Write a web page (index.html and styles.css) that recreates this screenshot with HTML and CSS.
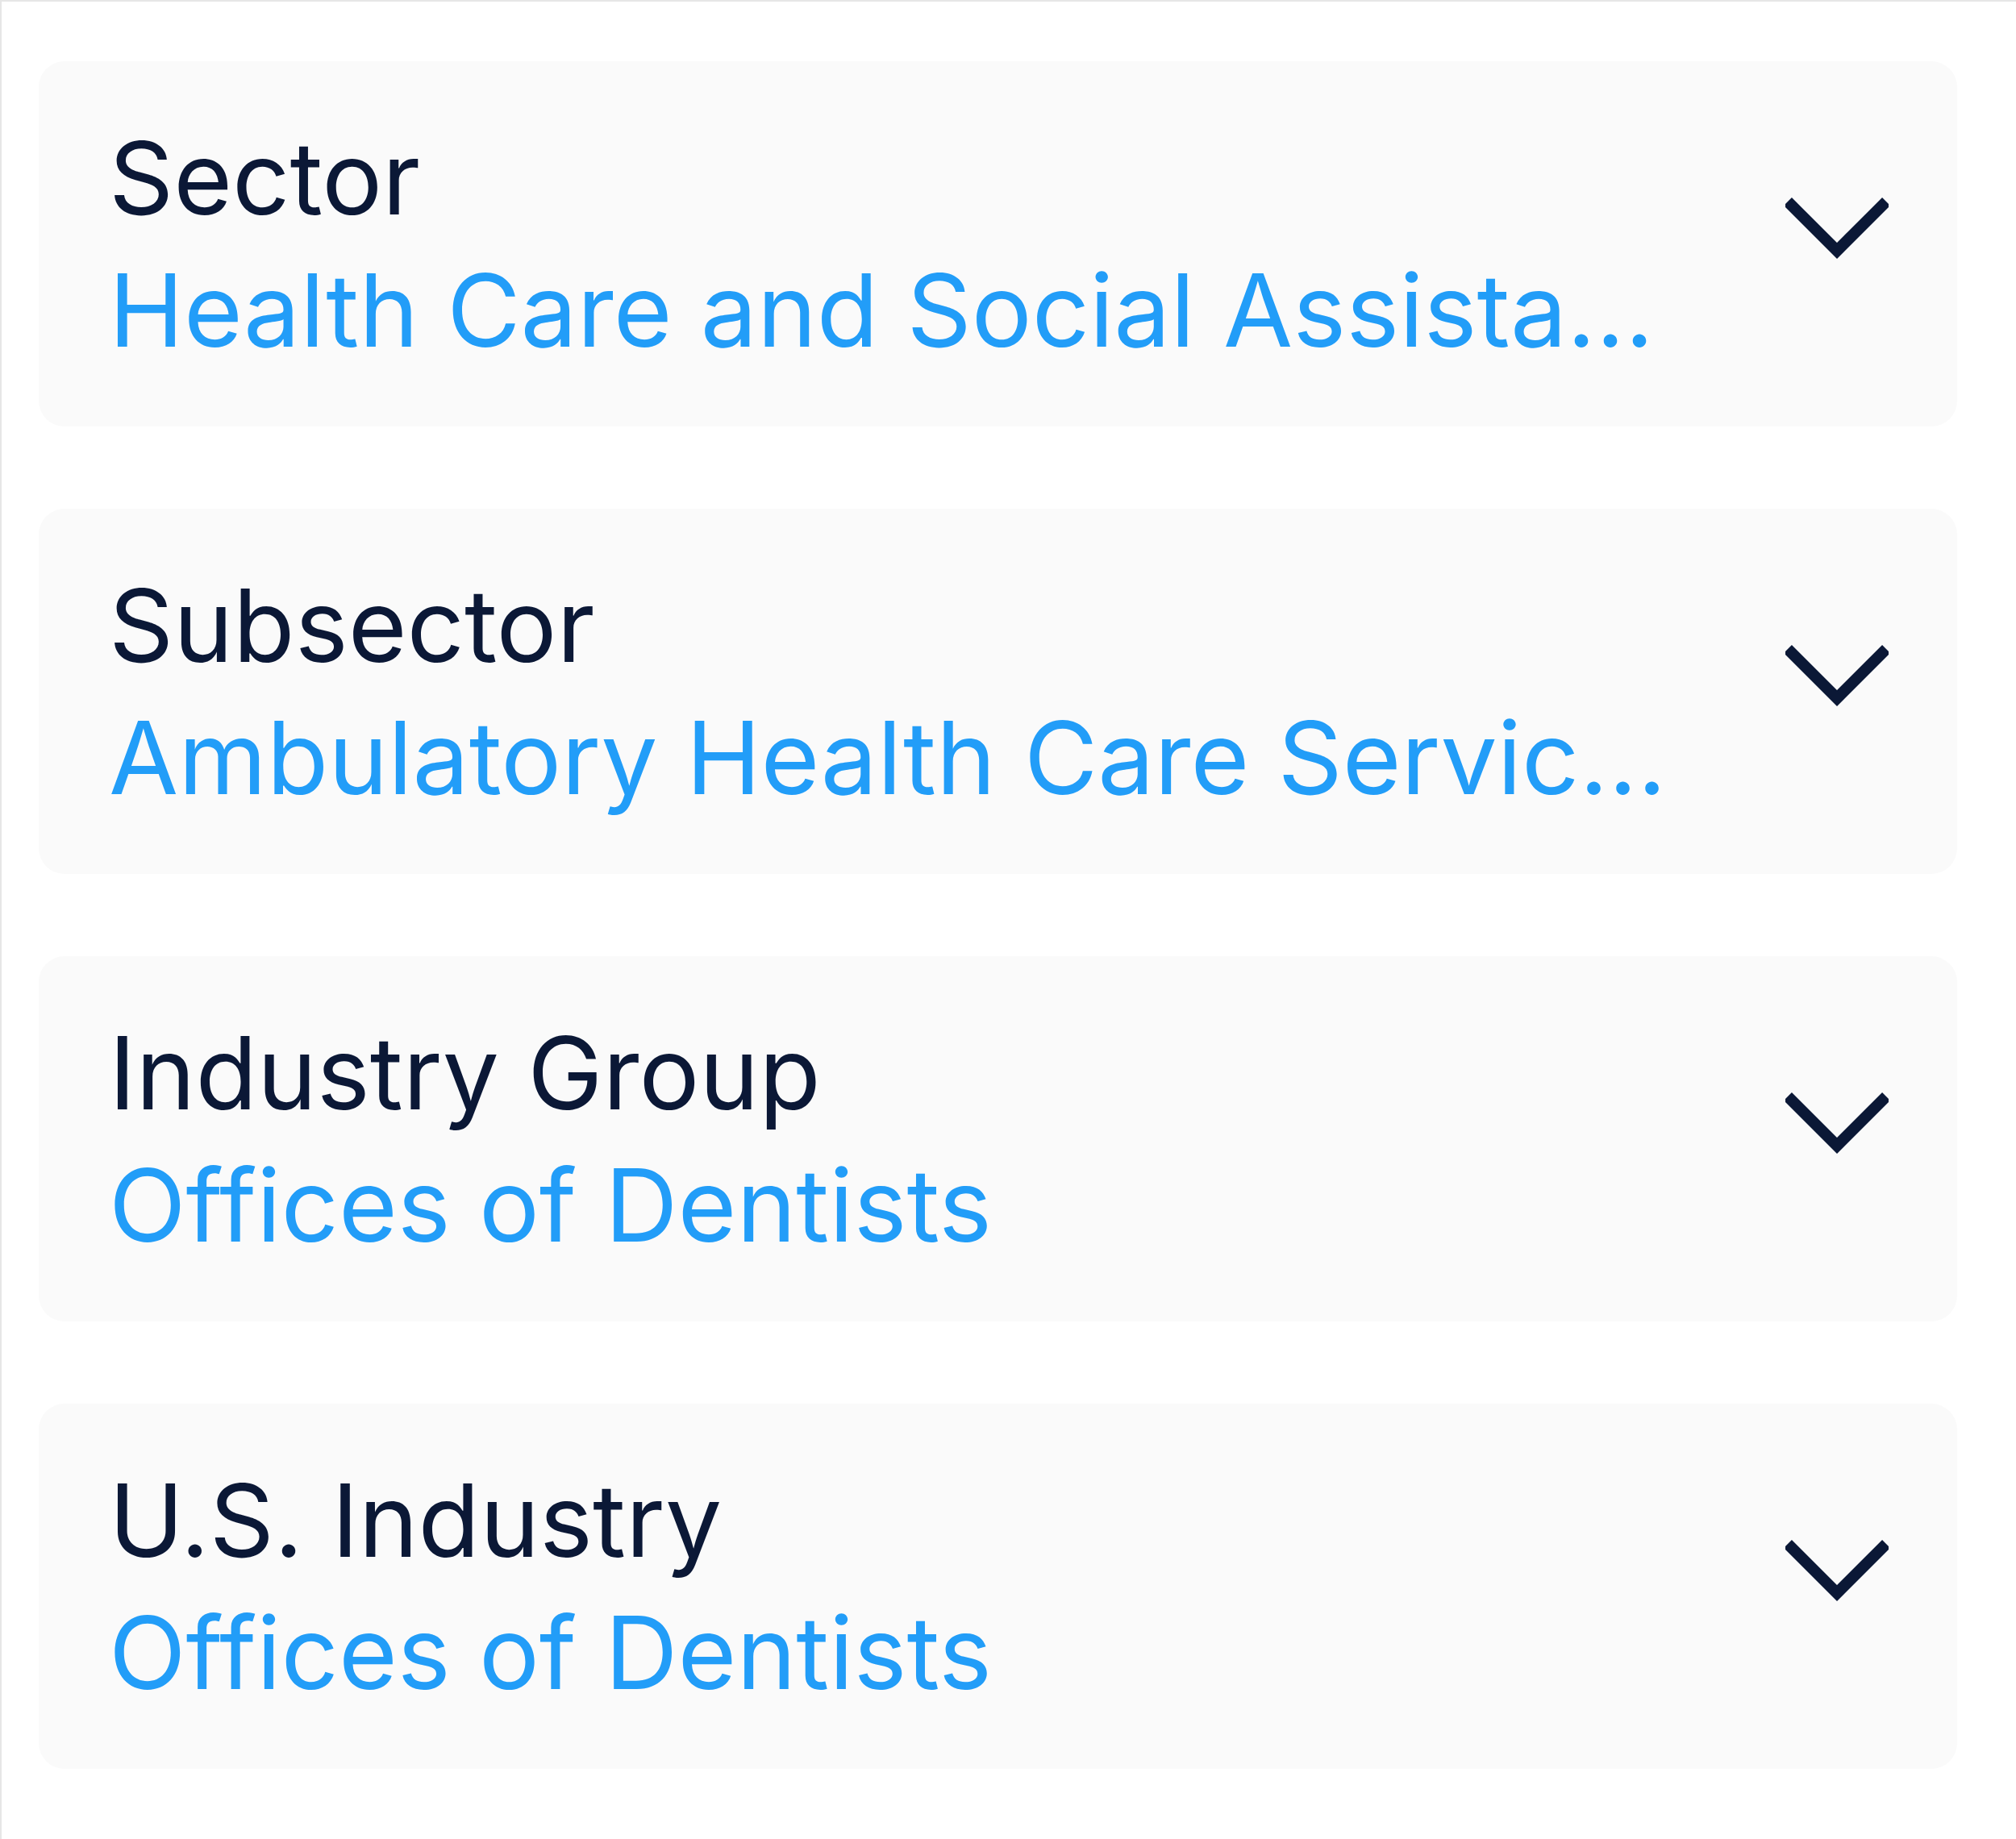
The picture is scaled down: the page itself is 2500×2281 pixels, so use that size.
FILE: index.html
```html
<!DOCTYPE html>
<html lang="en">
<head>
<meta charset="utf-8">
<title>Classification</title>
<link rel="stylesheet" href="styles.css">
</head>
<body>
<div class="panel">
  <div class="field">
    <div class="field-text">
      <div class="field-label">Sector</div>
      <div class="field-value">Health Care and Social Assistance</div>
    </div>
    <svg class="chevron" viewBox="0 0 128 128" aria-hidden="true"><path d="M3 11 L64 72 L125 11"/></svg>
  </div>
  <div class="field">
    <div class="field-text">
      <div class="field-label">Subsector</div>
      <div class="field-value">Ambulatory Health Care Services</div>
    </div>
    <svg class="chevron" viewBox="0 0 128 128" aria-hidden="true"><path d="M3 11 L64 72 L125 11"/></svg>
  </div>
  <div class="field">
    <div class="field-text">
      <div class="field-label">Industry Group</div>
      <div class="field-value">Offices of Dentists</div>
    </div>
    <svg class="chevron" viewBox="0 0 128 128" aria-hidden="true"><path d="M3 11 L64 72 L125 11"/></svg>
  </div>
  <div class="field">
    <div class="field-text">
      <div class="field-label">U.S. Industry</div>
      <div class="field-value">Offices of Dentists</div>
    </div>
    <svg class="chevron" viewBox="0 0 128 128" aria-hidden="true"><path d="M3 11 L64 72 L125 11"/></svg>
  </div>
</div>
</body>
</html>
```

FILE: styles.css
```css
html, body {
  margin: 0;
  padding: 0;
  background: #ffffff;
}
body {
  font-family: Inter, "Noto Sans", "Liberation Sans", sans-serif;
}
.panel {
  width: 2500px;
  height: 2281px;
  box-sizing: border-box;
  border-top: 2px solid #e6e6e6;
  border-left: 2px solid #e6e6e6;
  padding: 74px 73px 0 46px;
  display: flex;
  flex-direction: column;
  gap: 102px;
}
.field {
  height: 453px;
  box-sizing: border-box;
  background: #fafafa;
  border-radius: 32px;
  padding: 0 85px 0 87px;
  display: flex;
  align-items: center;
  gap: 138px;
}
.field-text {
  flex: 1;
  min-width: 0;
}
.field-label {
  font-size: 125px;
  line-height: 164px;
  color: #0b1836;
  white-space: nowrap;
}
.field-value {
  font-size: 125px;
  line-height: 164px;
  color: #229df8;
  white-space: nowrap;
  overflow: hidden;
  text-overflow: ellipsis;
}
.chevron {
  width: 128px;
  height: 128px;
  flex: none;
}
.chevron path {
  fill: none;
  stroke: #0b1836;
  stroke-width: 14;
  stroke-linecap: butt;
  stroke-linejoin: miter;
}
```
